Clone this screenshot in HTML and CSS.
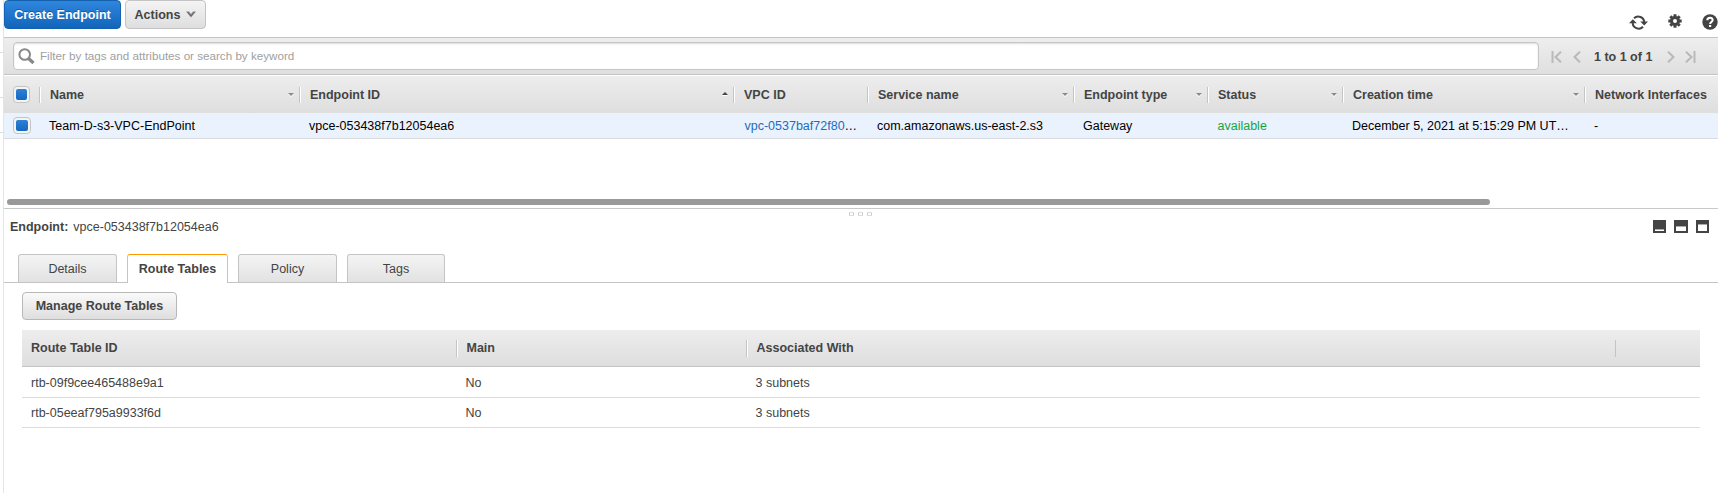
FILE: index.html
```html
<!DOCTYPE html>
<html lang="en">
<head>
<meta charset="utf-8">
<title>Endpoints</title>
<link rel="stylesheet" href="styles.css">
</head>
<body>
<div class="app">
  <div class="rail"><i class="stub s1"></i><i class="stub s2"></i><i class="stub s3"></i></div>
  <main class="main">
    <div class="actions">
      <button class="btn primary">Create Endpoint</button>
      <button class="btn menu">Actions
        <svg width="10" height="7" viewBox="0 0 10 7"><path d="M0 .5h3L5 3l2-2.500h3L5 6.500z" fill="#888"/><path d="M1.500 1L5 5l3.500-4" fill="none" stroke="#666" stroke-width="1"/></svg>
      </button>
      <div class="tools">
        <svg width="19" height="15" viewBox="0 0 19 15"><g fill="none" stroke="#444" stroke-width="2"><path d="M5 3.200A6 6 0 0 1 15.200 7.500"/><path d="M14 11.800A6 6 0 0 1 3.700 7.500"/></g><path d="M11.200 6.500H19L15.200 10.600zM0 8.300h7.800L3.800 4.200z" fill="#444"/></svg>
        <svg width="14" height="14" viewBox="-7 -7 14 14"><g stroke="#444" stroke-width="3"><path d="M0-6.700V6.700M-6.700 0H6.700M-4.700-4.700l9.400 9.400M4.700-4.700l-9.400 9.400"/></g><circle r="4.900" fill="#444"/><circle r="2" fill="#fff"/></svg>
        <svg width="16" height="16" viewBox="0 0 16 16"><circle cx="8" cy="8" r="7.700" fill="#444"/><path d="M5.300 6.300C5.300 2.900 10.800 3 10.700 6.100 10.700 7.900 8.100 7.800 8.100 10" fill="none" stroke="#fff" stroke-width="2"/><path d="M7 11h2.200v2H7z" fill="#fff"/></svg>
      </div>
    </div>
    <div class="filter">
      <div class="search">
        <svg width="17" height="17" viewBox="0 0 17 17"><circle cx="6.700" cy="6.500" r="5.300" fill="none" stroke="#888" stroke-width="2"/><path d="M10.500 10.500l5 4.500" stroke="#888" stroke-width="3.300"/></svg>
        <span>Filter by tags and attributes or search by keyword</span>
      </div>
      <div class="pager">
        <svg width="11" height="12" viewBox="0 0 11 12"><path d="M1.500 0v12M10 .8L4.500 6l5.500 5.200"/></svg>
        <svg class="prev" width="8" height="12" viewBox="0 0 8 12"><path d="M7 .8L1.500 6 7 11.200"/></svg>
        <b>1 to 1 of 1</b>
        <svg class="next" width="8" height="12" viewBox="0 0 8 12"><path d="M1 .8L6.500 6 1 11.200"/></svg>
        <svg width="11" height="12" viewBox="0 0 11 12"><path d="M9.500 0v12M1 .8L6.500 6 1 11.200"/></svg>
      </div>
    </div>
    <div class="grid head">
      <div class="pick"><i class="check"><u></u></i></div>
      <div class="th">Name<i class="down"></i></div>
      <div class="th">Endpoint ID<i class="up"></i></div>
      <div class="th">VPC ID</div>
      <div class="th">Service name<i class="down"></i></div>
      <div class="th">Endpoint type<i class="down"></i></div>
      <div class="th">Status<i class="down"></i></div>
      <div class="th">Creation time<i class="down"></i></div>
      <div class="th">Network Interfaces</div>
    </div>
    <div class="grid row">
      <div class="pick"><i class="check wide"><u></u></i></div>
      <div class="td">Team-D-s3-VPC-EndPoint</div>
      <div class="td">vpce-053438f7b12054ea6</div>
      <div class="td vpc"><a>vpc-0537baf72f80</a>…</div>
      <div class="td">com.amazonaws.us-east-2.s3</div>
      <div class="td">Gateway</div>
      <div class="td ok">available</div>
      <div class="td">December 5, 2021 at 5:15:29 PM UT…</div>
      <div class="td">-</div>
    </div>
    <div class="scroll"><i></i></div>
    <div class="grip"><i></i><i></i><i></i></div>
    <div class="title">
      <b>Endpoint:</b><span>vpce-053438f7b12054ea6</span>
      <div class="views"><i class="v1"><u></u></i><i class="v2"><u></u></i><i class="v3"><u></u></i></div>
    </div>
    <div class="tabs">
      <div class="tab">Details</div>
      <div class="tab active">Route Tables</div>
      <div class="tab">Policy</div>
      <div class="tab last">Tags</div>
    </div>
    <div class="panel">
      <button class="btn manage">Manage Route Tables</button>
      <div class="routes rhead"><div>Route Table ID</div><div class="sep">Main</div><div class="sep">Associated With</div><div class="sep"></div></div>
      <div class="routes rrow"><div>rtb-09f9cee465488e9a1</div><div>No</div><div>3 subnets</div></div>
      <div class="routes rrow second"><div>rtb-05eeaf795a9933f6d</div><div>No</div><div>3 subnets</div></div>
    </div>
  </main>
</div>
</body>
</html>
```
FILE: styles.css
```css
* { box-sizing: border-box; }
body { margin: 0; background: #fff; color: #444; font: 12.5px/16px "Liberation Sans", Arial, sans-serif; overflow: hidden; }
svg { display: block; flex: none; }
.app { display: flex; height: 493px; }
.rail { width: 4px; flex: none; border-right: 1px solid #e4e4e4; display: flex; flex-direction: column; }
.stub { height: 1px; background: #ddd; }
.s1 { margin-top: 52px; }
.s2 { margin-top: 44px; }
.s3 { margin-top: 34px; }
.main { width: 1714px; flex: none; }

.actions { height: 37px; display: flex; align-items: flex-start; gap: 4px; }
.btn { font: bold 12.5px/16px "Liberation Sans", Arial, sans-serif; color: #444; height: 29px; margin: 0; border-radius: 4px; white-space: nowrap; display: flex; align-items: center; justify-content: center; padding: 0; }
.primary { width: 117px; color: #fff; border: 1px solid #1461b0; background: linear-gradient(#2f86dd, #1166bb); text-shadow: 0 -1px 0 #155a9f; }
.menu { width: 81px; gap: 6px; border: 1px solid #c4c4c4; background: linear-gradient(#f4f4f4, #dedede); }
.tools { margin: 13px 0 0 auto; display: flex; align-items: center; }
.tools svg:nth-child(1) { margin: 2px 20px 0 0; }
.tools svg:nth-child(2) { margin: 0 20px 1px 0; }

.filter { height: 38px; border-top: 1px solid #c4c4c4; border-bottom: 1px solid #c4c4c4; background: linear-gradient(#eee, #dfdfdf); display: flex; align-items: flex-start; padding: 4px 0 0 9px; }
.search { width: 1526px; height: 28px; border: 1px solid #c6c6c6; border-radius: 4px; background: #fff; box-shadow: inset 0 1px 2px #ddd; display: flex; align-items: center; padding-left: 4px; font-size: 11.650px; color: #a0a0a0; gap: 5px; }
.pager { display: flex; align-items: center; height: 29px; padding-left: 12px; }
.pager svg { fill: none; stroke: #b9b9b9; stroke-width: 2; }
.pager .prev { margin: 0 13px 0 11px; }
.pager .next { margin: 0 10px 0 15px; }

.grid { display: grid; grid-template-columns: 35px 260px 434px 134px 206px 134px 135px 242px 134px; }
.head { height: 38px; border-top: 1px solid #fff; background: linear-gradient(#ededed, #dedede); align-items: center; font-weight: bold; }
.th { height: 16px; border-left: 1px solid #c4c4c4; box-shadow: inset 1px 0 0 #fff; padding-left: 10px; display: flex; align-items: center; justify-content: space-between; padding-right: 5px; white-space: nowrap; }
.down, .up { border: 0 solid transparent; border-width: 3px 3.500px; width: 0; height: 0; }
.down { border-top-color: #8a8a8a; border-bottom-width: 0; filter: drop-shadow(0 1px 0 #fff); }
.up { border-bottom-color: #444; border-top-width: 0; margin-bottom: 3px; filter: drop-shadow(0 1px 0 #fff); }
.pick { padding-left: 9px; }
.check { display: flex; align-items: center; justify-content: center; width: 17px; height: 17px; border: 1px solid #c4c4c4; border-radius: 4px; background: #f4f4f4; }
.check u { width: 11px; height: 11px; border-radius: 2px; background: linear-gradient(#2d82d8, #1468be); }
.wide { width: 18px; }
.wide u { width: 12px; }
.row { height: 26px; background: #eaf2fe; border-bottom: 1px solid #d9dbdf; align-items: center; color: #000; }
.td { padding-left: 10px; white-space: nowrap; }
.vpc { padding-left: 11.500px; }
.vpc a { color: #1b6dc1; }
.ok { color: #1ba13c; padding-left: 10.500px; }

.scroll { height: 70px; border-bottom: 1px solid #c8c8c8; padding: 60px 0 0 3px; }
.scroll i { display: block; width: 1483px; height: 6px; border-radius: 3px; background: #999; }
.grip { height: 7px; display: flex; gap: 4px; padding: 3px 0 0 845px; }
.grip i { width: 5px; height: 4px; border: 1px solid #ccc; border-top-color: #ddd; border-bottom-color: #ddd; border-radius: 1px; }
.title { height: 22px; display: flex; align-items: center; padding: 0 9px 0 6px; }
.title span { margin-left: 5px; }
.views { margin: 0 0 1px auto; display: flex; gap: 8px; }
.views i { width: 13px; height: 13px; background: #444; display: flex; align-items: flex-end; justify-content: center; padding-bottom: 2px; }
.views .v2 { width: 14px; }
.views u { width: 9px; background: #fff; border-top: 1px solid #aaa; }
.views .v2 u { width: 10px; }
.v1 u { height: 2px; }
.v2 u { height: 5px; }
.v3 u { height: 7px; }

.tabs { height: 45px; display: flex; align-items: flex-end; border-bottom: 1px solid #c4c4c4; padding-left: 14px; gap: 10px; }
.tab { width: 99px; height: 28px; border: 1px solid #c4c4c4; border-bottom: 0; border-radius: 3px 3px 0 0; background: linear-gradient(#f4f4f4, #e2e2e2); text-align: center; line-height: 28px; }
.active { width: 101px; height: 29px; margin-bottom: -1px; background: #fff; border-top-color: #f90; font-weight: bold; }
.last { width: 98px; }
.panel { padding: 9px 18px 0; }
.manage { width: 155px; height: 28px; border: 1px solid #b8b8b8; background: linear-gradient(#fafafa, #dedede); }
.routes { display: grid; grid-template-columns: 434px 290px 869px 1fr; align-items: center; }
.routes > div:first-child { padding-left: 9px; }
.rhead { height: 37px; margin-top: 10px; background: linear-gradient(#ededed, #dedede); border-bottom: 1px solid #c4c4c4; font-weight: bold; }
.sep { height: 17px; border-left: 1px solid #c4c4c4; box-shadow: inset 1px 0 0 #fff; padding-left: 9.500px; }
.sep:last-child { box-shadow: none; }
.rrow { height: 31px; border-bottom: 1px solid #ddd; padding-top: 1px; }
.second { height: 30px; padding-top: 0; }
.rrow > div { padding-left: 9.500px; }
```
